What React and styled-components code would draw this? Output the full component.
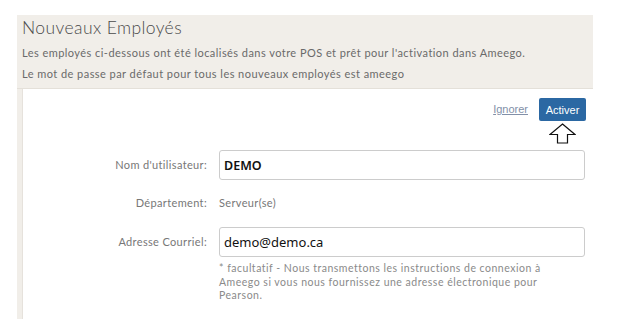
import React from "react";
import styled, { createGlobalStyle } from "styled-components";

const GlobalStyle = createGlobalStyle`
  html, body {
    margin: 0;
    padding: 0;
    background: #ffffff;
  }
  body {
    font-family: Lato, "Open Sans", sans-serif;
  }
`;

const Page = styled.div`
  width: 622px;
  height: 335px;
  box-sizing: border-box;
  padding: 15px 0 0 17px;
  overflow: hidden;
`;

const Panel = styled.div`
  width: 576px;
  height: 304px;
  background: #f1eee9;
  display: flex;
  flex-direction: column;
`;

const Header = styled.div`
  padding: 2px 5px 6px;
  color: #666;
  border-bottom: 1px solid #e4e0d9;
`;

const Title = styled.h1`
  margin: 0 0 6px;
  font-family: Lato, sans-serif;
  font-weight: 300;
  font-size: 17.5px;
  line-height: 22px;
  color: #4a4a4a;
  letter-spacing: 0.4px;
`;

const Lead = styled.p`
  margin: 0;
  font-size: 11px;
  line-height: 16px;
  letter-spacing: 0.45px;
  color: #6a6a6a;

  & + & {
    margin-top: 5px;
  }
`;

const Card = styled.div`
  flex: 1;
  margin-left: 5px;
  background: #ffffff;
  border-left: 1px solid #e6e2dc;
  padding: 9px 7px 0 0;
`;

const Actions = styled.div`
  display: flex;
  justify-content: flex-end;
  align-items: flex-start;
  gap: 11px;
`;

const IgnoreLink = styled.a`
  font-family: "Liberation Sans", Arial, sans-serif;
  font-size: 11px;
  line-height: 23px;
  color: #8290a8;
  text-decoration: underline;
  cursor: pointer;
`;

const ButtonColumn = styled.div`
  display: flex;
  flex-direction: column;
  align-items: center;
  gap: 2px;
`;

const PrimaryButton = styled.button`
  width: 47px;
  height: 23px;
  border: none;
  border-radius: 2px;
  background: #2b68a3;
  color: #ffffff;
  font-family: "Liberation Sans", Arial, sans-serif;
  font-size: 11px;
  padding: 0;
  cursor: pointer;
`;

const Form = styled.div`
  margin-top: 6px;
`;

const Row = styled.div`
  display: grid;
  grid-template-columns: 184px 366px;
  column-gap: 12px;
  margin-top: ${(p) => p.$gap || 0}px;
`;

const Label = styled.div`
  text-align: right;
  font-size: 11px;
  letter-spacing: 0.35px;
  line-height: ${(p) => (p.$tall ? "30px" : "16px")};
  color: #777;
`;

const Value = styled.div`
  font-size: 11px;
  letter-spacing: 0.35px;
  line-height: 16px;
  color: #777;
`;

const Input = styled.input`
  display: block;
  width: 100%;
  height: 30px;
  box-sizing: border-box;
  border: 1px solid #cccccc;
  border-radius: 3px;
  padding: 0 4px;
  font-family: "Noto Sans", "Open Sans", sans-serif;
  font-size: ${(p) => (p.$bold ? "12.5px" : "13px")};
  font-weight: ${(p) => (p.$bold ? 600 : 400)};
  color: #111;
  outline: none;
`;

const Help = styled.p`
  margin: 5px 0 0;
  font-size: 10.5px;
  line-height: 13.5px;
  letter-spacing: 0.5px;
  color: #8a8a8a;
`;

function UpArrow() {
  return (
    <svg width="27" height="21" viewBox="0 0 27 21">
      <path
        d="M13.5 1 L26 11.5 L18.5 11.5 L18.5 20 L8.5 20 L8.5 11.5 L1 11.5 Z"
        fill="#ffffff"
        stroke="#111"
        strokeWidth="1.2"
        strokeLinejoin="miter"
      />
    </svg>
  );
}

export default function App() {
  return (
    <React.Fragment>
      <GlobalStyle />
      <Page>
        <Panel>
          <Header>
            <Title>Nouveaux Employés</Title>
            <Lead>
              Les employés ci-dessous ont été localisés dans votre POS et prêt
              pour l'activation dans Ameego.
            </Lead>
            <Lead>Le mot de passe par défaut pour tous les nouveaux employés est ameego</Lead>
          </Header>

          <Card>
            <Actions>
              <IgnoreLink>Ignorer</IgnoreLink>
              <ButtonColumn>
                <PrimaryButton>Activer</PrimaryButton>
                <UpArrow />
              </ButtonColumn>
            </Actions>

            <Form>
              <Row>
                <Label $tall>Nom d'utilisateur:</Label>
                <Input $bold defaultValue="DEMO" />
              </Row>
              <Row $gap={15}>
                <Label>Département:</Label>
                <Value>Serveur(se)</Value>
              </Row>
              <Row $gap={16}>
                <Label $tall>Adresse Courriel:</Label>
                <div>
                  <Input defaultValue="demo@demo.ca" />
                  <Help>
                    * facultatif - Nous transmettons les instructions de connexion à
                    <br />
                    Ameego si vous nous fournissez une adresse électronique pour
                    <br />
                    Pearson.
                  </Help>
                </div>
              </Row>
            </Form>
          </Card>
        </Panel>
      </Page>
    </React.Fragment>
  );
}
